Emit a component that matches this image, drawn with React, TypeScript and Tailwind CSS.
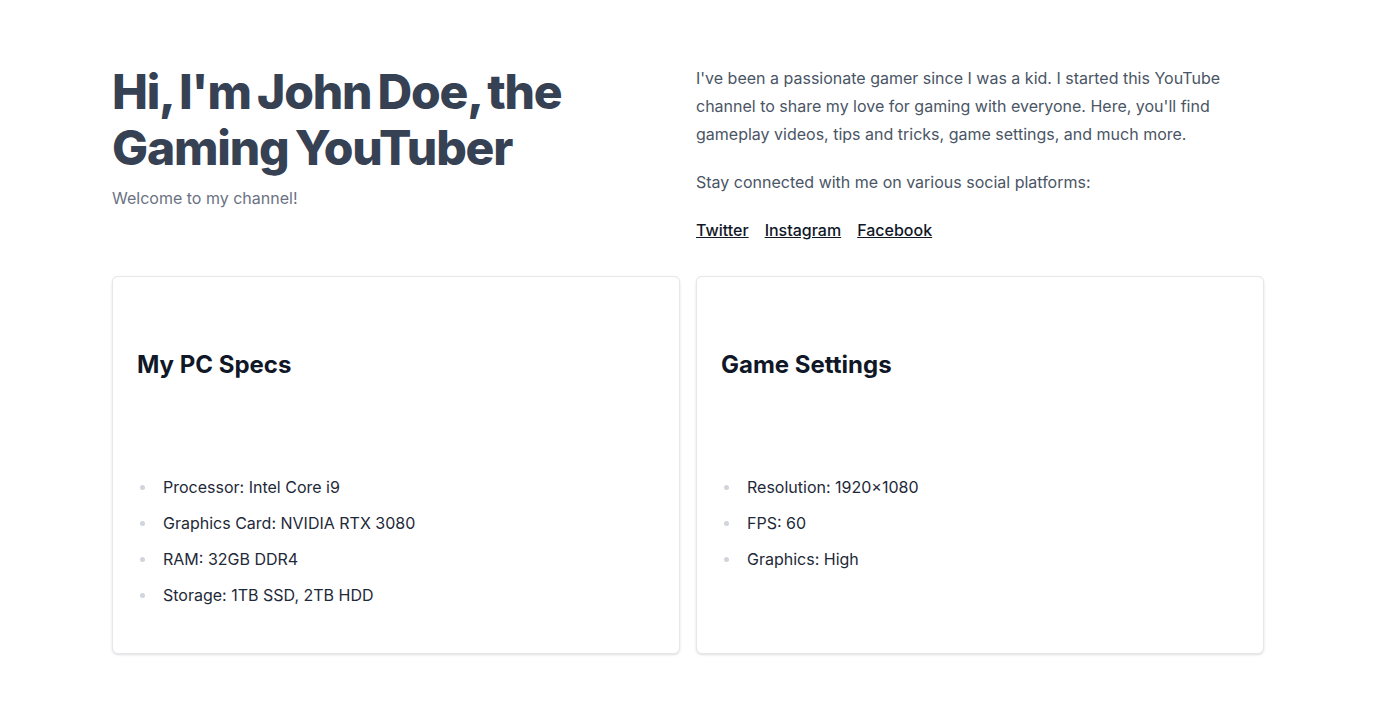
const specs = [
  'Processor: Intel Core i9',
  'Graphics Card: NVIDIA RTX 3080',
  'RAM: 32GB DDR4',
  'Storage: 1TB SSD, 2TB HDD',
];

const settings = ['Resolution: 1920×1080', 'FPS: 60', 'Graphics: High'];

function InfoCard({ title, items }: { title: string; items: string[] }) {
  return (
    <div className="rounded-md border border-gray-200 bg-white px-6 pt-[72px] pb-[46px] shadow-sm">
      <h2 className="text-2xl leading-8 font-bold text-gray-900">{title}</h2>
      <ul className="mt-[94px] flex flex-col gap-3">
        {items.map((item) => (
          <li key={item} className="flex items-center text-base leading-6 text-gray-800">
            <span className="ml-[3px] mr-[18px] h-[5px] w-[5px] rounded-full bg-gray-300" />
            {item}
          </li>
        ))}
      </ul>
    </div>
  );
}

export default function App() {
  return (
    <div className="min-h-screen bg-white font-['Inter',sans-serif]">
      <div className="mx-auto max-w-6xl pt-16 pb-16">
        <div className="grid grid-cols-2 gap-4">
          <div>
            <h1 className="text-5xl leading-[56px] font-extrabold tracking-tight [word-spacing:-3px] text-gray-700">
              Hi, I'm John Doe, the Gaming YouTuber
            </h1>
            <p className="mt-2 text-base leading-7 text-gray-500">Welcome to my channel!</p>
          </div>
          <div className="text-base leading-7 text-gray-600">
            <p>
              I've been a passionate gamer since I was a kid. I started this YouTube channel to share my
              love for gaming with everyone. Here, you'll find gameplay videos, tips and tricks, game
              settings, and much more.
            </p>
            <p className="mt-5">Stay connected with me on various social platforms:</p>
            <div className="mt-5 flex gap-4 font-medium text-gray-900">
              <a href="#" className="underline">Twitter</a>
              <a href="#" className="underline">Instagram</a>
              <a href="#" className="underline">Facebook</a>
            </div>
          </div>
        </div>
        <div className="mt-8 grid grid-cols-2 gap-4">
          <InfoCard title="My PC Specs" items={specs} />
          <InfoCard title="Game Settings" items={settings} />
        </div>
      </div>
    </div>
  );
}
